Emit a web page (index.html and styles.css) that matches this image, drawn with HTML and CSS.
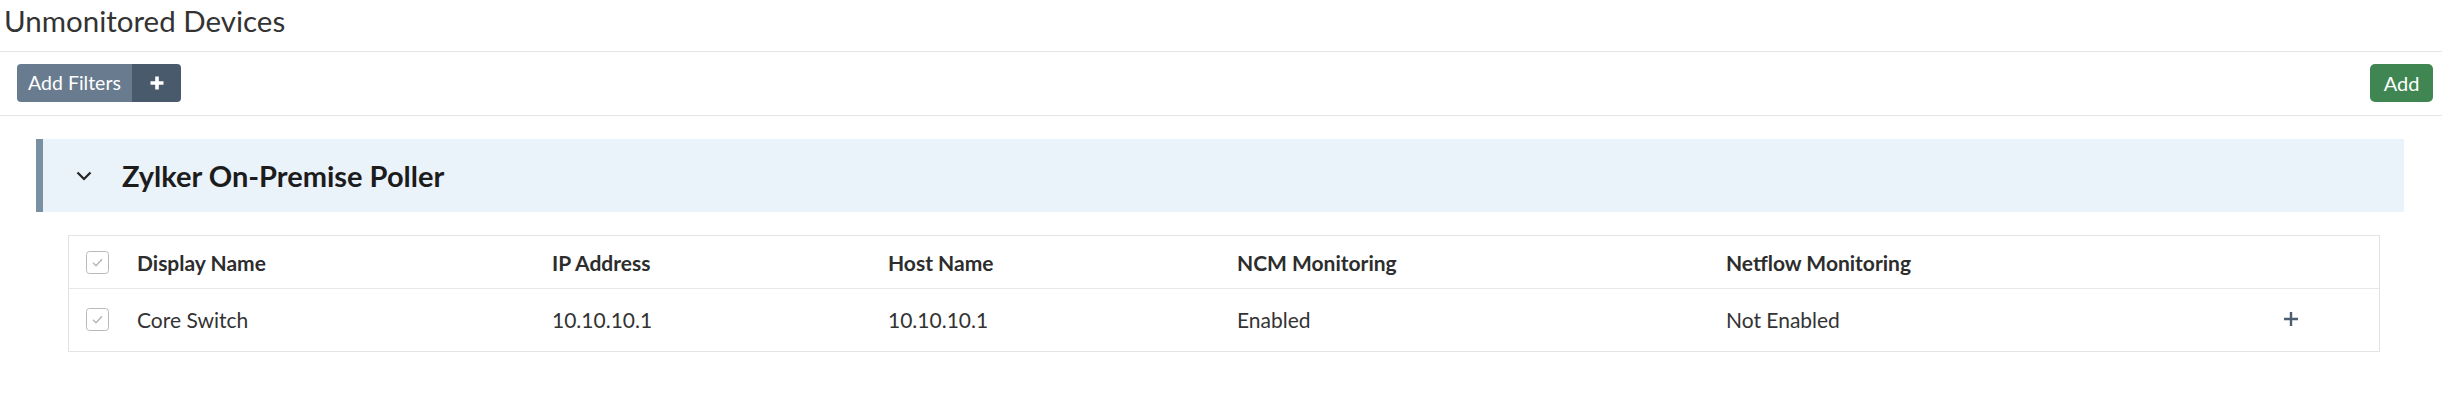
FILE: index.html
```html
<!DOCTYPE html>
<html lang="en">
<head>
<meta charset="utf-8">
<title>Unmonitored Devices</title>
<link rel="stylesheet" href="styles.css">
</head>
<body>
<header class="page-title">Unmonitored Devices</header>
<div class="toolbar">
  <div class="filter-btn">
    <span class="filter-label">Add Filters</span>
    <span class="filter-plus">
      <svg width="16" height="16" viewBox="0 0 16 16"><path d="M8 1.5v13M1.5 8h13" stroke="#fff" stroke-width="3.6" fill="none"/></svg>
    </span>
  </div>
  <button class="add-btn">Add</button>
</div>
<section class="group">
  <div class="group-head">
    <svg class="chevron" width="16" height="10" viewBox="0 0 16 10"><path d="M1.5 1.5l6.5 6.5 6.5-6.5" stroke="#222" stroke-width="2.2" fill="none"/></svg>
    <span class="group-title">Zylker On-Premise Poller</span>
  </div>
  <div class="grid-table">
    <div class="row head">
      <span class="cell cb"><svg width="23" height="23" viewBox="0 0 23 23"><rect x="0.5" y="0.5" width="22" height="22" rx="3" fill="#fff" stroke="#b9b9b9"/><path d="M7 11.8l3 3 6-6.6" stroke="#b5b5b5" stroke-width="1.4" fill="none"/></svg></span>
      <span class="cell">Display Name</span>
      <span class="cell">IP Address</span>
      <span class="cell">Host Name</span>
      <span class="cell">NCM Monitoring</span>
      <span class="cell">Netflow Monitoring</span>
      <span class="cell"></span>
    </div>
    <div class="row body">
      <span class="cell cb"><svg width="23" height="23" viewBox="0 0 23 23"><rect x="0.5" y="0.5" width="22" height="22" rx="3" fill="#fff" stroke="#b9b9b9"/><path d="M7 11.8l3 3 6-6.6" stroke="#b5b5b5" stroke-width="1.4" fill="none"/></svg></span>
      <span class="cell">Core Switch</span>
      <span class="cell">10.10.10.1</span>
      <span class="cell">10.10.10.1</span>
      <span class="cell">Enabled</span>
      <span class="cell">Not Enabled</span>
      <span class="cell act"><svg width="16" height="16" viewBox="0 0 16 16"><path d="M8 1v14M1 8h14" stroke="#4d5e73" stroke-width="2.4" fill="none"/></svg></span>
    </div>
  </div>
</section>
</body>
</html>
```
FILE: styles.css
```css
* { box-sizing: border-box; }
body {
  margin: 0;
  font-family: Lato, "Noto Sans", sans-serif;
  color: #333;
  background: #fff;
}
.page-title {
  font-size: 29.5px;
  line-height: 41px;
  padding: 0 0 10px 4px;
  border-bottom: 1px solid #e5e5e5;
  color: #333;
  font-weight: 400;
}
.toolbar {
  display: flex;
  justify-content: space-between;
  align-items: center;
  padding: 12px 9px 13px 17px;
  border-bottom: 1px solid #e5e5e5;
}
.filter-btn {
  display: flex;
  height: 38px;
  border-radius: 4px;
  overflow: hidden;
}
.filter-label {
  background: #687b8f;
  color: #fff;
  font-size: 19.5px;
  line-height: 38px;
  width: 115px;
  text-align: center;
}
.filter-plus {
  background: #4a5a6d;
  width: 49px;
  display: flex;
  align-items: center;
  justify-content: center;
}
.add-btn {
  height: 38px;
  width: 63px;
  border: 0;
  border-radius: 5px;
  background: #3f8652;
  color: #fff;
  font-family: inherit;
  font-size: 20px;
  padding: 0;
}
.group {
  padding: 23px 38px 0 36px;
}
.group-head {
  height: 73px;
  background: #eaf2fa;
  border-left: 7px solid #7990a2;
  display: flex;
  align-items: center;
}
.chevron {
  margin-left: 33px;
}
.group-title {
  margin-left: 30px;
  font-size: 29px;
  font-weight: 700;
  color: #1c1c1c;
}
.grid-table {
  margin: 23px 24px 0 32px;
  border: 1px solid #e3e3e3;
}
.row {
  display: grid;
  grid-template-columns: 51px 415px 336px 349px 489px 557px 1fr;
  align-items: center;
  padding-left: 17px;
}
.row.head {
  height: 53px;
  border-bottom: 1px solid #e8e8e8;
  font-weight: 700;
  font-size: 21px;
  color: #2d2d2d;
}
.row.body {
  height: 62px;
  padding-bottom: 2px;
  font-size: 21px;
  color: #333;
}
.cell.cb svg { display: block; }
.cell.act svg { display: block; }
```
